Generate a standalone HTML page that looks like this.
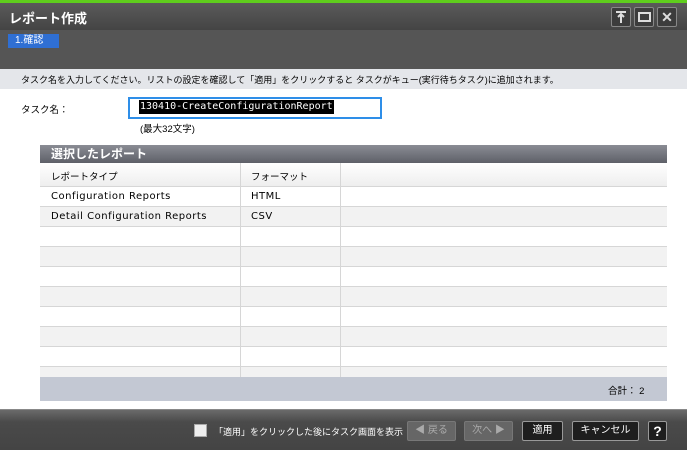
<!DOCTYPE html>
<html><head><meta charset="utf-8"><style>
*{margin:0;padding:0;box-sizing:border-box}
body{width:687px;height:450px;overflow:hidden;background:#fff;font-family:"Liberation Sans","Noto Sans CJK JP",sans-serif;font-size:11px;color:#000;position:relative}
.a{position:absolute;white-space:nowrap}
.wb{position:absolute;top:7px;width:20px;height:20px;border:1px solid #888;border-radius:2px;background:#3c3c3c;color:#ddd;text-align:center;line-height:18px;font-size:14px;font-weight:bold}
.row{position:absolute;left:40px;width:627px;height:20px;border-bottom:1px solid #d6d6d6}
.c{position:absolute;top:0;height:100%;border-right:1px solid #d6d6d6}
.d{position:absolute;top:4px;font-family:'DejaVu Sans',sans-serif;font-size:10px;letter-spacing:0.5px;white-space:nowrap}
.btn{position:absolute;top:421px;height:20px;border:1px solid #999;border-radius:2px;background:#1e1e1e;color:#fff;text-align:center;line-height:18px;font-size:10px}
</style></head><body>
<div class="a" style="left:0;top:0;width:687px;height:3px;background:#5fce1d"></div>
<div class="a" style="left:0;top:3px;width:687px;height:27px;background:linear-gradient(#5a5a5a,#444)"></div>
<div class="a" style="left:9px;top:8px;color:#fff;font-size:13px;font-weight:bold">レポート作成</div>
<div class="wb" style="left:611px">
<svg width="18" height="18" viewBox="0 0 18 18"><path d="M4 4h10M9 6v9M6 9l3-3 3 3" stroke="#ddd" stroke-width="2" fill="none"/></svg></div>
<div class="wb" style="left:634px"><div style="margin:4px auto;width:13px;height:10px;border:2px solid #ddd"></div></div>
<div class="wb" style="left:657px">✕</div>
<div class="a" style="left:0;top:30px;width:687px;height:39px;background:#555"></div>
<div class="a" style="left:8px;top:34px;width:51px;height:14px;background:#2f6fd3;color:#fff;font-size:10px;line-height:14px;padding-left:7px">1.確認</div>
<div class="a" style="left:0;top:69px;width:687px;height:20px;background:#e4e6ea"></div>
<div class="a" style="left:21px;top:73px;font-size:9px">タスク名を入力してください。リストの設定を確認して「適用」をクリックすると タスクがキュー(実行待ちタスク)に追加されます。</div>
<div class="a" style="left:21px;top:102px;font-size:9.5px">タスク名：</div>
<div class="a" style="left:128px;top:97px;width:254px;height:22px;border:2px solid #2e8ee8;background:#fff"></div>
<div class="a" style="left:139px;top:100px;background:#000;color:#fff;font-family:'DejaVu Sans Mono',monospace;font-size:10px;line-height:14px;padding:0 1px">130410-CreateConfigurationReport</div>
<div class="a" style="left:140px;top:121px;font-size:9.5px">(最大32文字)</div>
<div class="a" style="left:40px;top:145px;width:627px;height:18px;background:linear-gradient(#8a8c94,#5e6068);color:#fff;font-weight:bold;font-size:12px;line-height:18px;padding-left:11px">選択したレポート</div>
<div class="row" style="top:163px;height:24px;background:linear-gradient(#fff,#eee)"><div class="c" style="left:0;width:201px"></div><div class="c" style="left:201px;width:100px"></div>
<span class="a" style="left:11px;top:6px;font-size:9.5px">レポートタイプ</span><span class="a" style="left:211px;top:6px;font-size:9.5px">フォーマット</span></div>
<div class="row" style="top:187px;background:#fff"><div class="c" style="left:0;width:201px"></div><div class="c" style="left:201px;width:100px"></div><span class="d" style="left:11px">Configuration Reports</span><span class="d" style="left:211px">HTML</span></div>
<div class="row" style="top:207px;background:#f2f2f2"><div class="c" style="left:0;width:201px"></div><div class="c" style="left:201px;width:100px"></div><span class="d" style="left:11px">Detail Configuration Reports</span><span class="d" style="left:211px">CSV</span></div>
<div class="row" style="top:227px;background:#fff"><div class="c" style="left:0;width:201px"></div><div class="c" style="left:201px;width:100px"></div></div>
<div class="row" style="top:247px;background:#f2f2f2"><div class="c" style="left:0;width:201px"></div><div class="c" style="left:201px;width:100px"></div></div>
<div class="row" style="top:267px;background:#fff"><div class="c" style="left:0;width:201px"></div><div class="c" style="left:201px;width:100px"></div></div>
<div class="row" style="top:287px;background:#f2f2f2"><div class="c" style="left:0;width:201px"></div><div class="c" style="left:201px;width:100px"></div></div>
<div class="row" style="top:307px;background:#fff"><div class="c" style="left:0;width:201px"></div><div class="c" style="left:201px;width:100px"></div></div>
<div class="row" style="top:327px;background:#f2f2f2"><div class="c" style="left:0;width:201px"></div><div class="c" style="left:201px;width:100px"></div></div>
<div class="row" style="top:347px;background:#fff"><div class="c" style="left:0;width:201px"></div><div class="c" style="left:201px;width:100px"></div></div>
<div class="row" style="top:367px;height:10px;background:#f2f2f2;border:none"><div class="c" style="left:0;width:201px"></div><div class="c" style="left:201px;width:100px"></div></div>
<div class="a" style="left:40px;top:377px;width:627px;height:24px;background:#c3c8d3"></div>
<div class="a" style="left:608px;top:383px;font-size:9.5px">合計： 2</div>
<div class="a" style="left:0;top:409px;width:687px;height:41px;background:linear-gradient(#6a6a6a,#4a4a4a 30%,#444);border-top:1px solid #888"></div>
<div class="a" style="left:194px;top:424px;width:13px;height:13px;background:#eee;border:1px solid #aaa"></div>
<div class="a" style="left:214px;top:425px;color:#fff;font-size:9px">「適用」をクリックした後にタスク画面を表示</div>
<div class="btn" style="left:407px;width:49px;background:#666;border-color:#777;color:#aaa">◀ 戻る</div>
<div class="btn" style="left:464px;width:49px;background:#666;border-color:#777;color:#aaa">次へ ▶</div>
<div class="btn" style="left:522px;width:41px">適用</div>
<div class="btn" style="left:572px;width:67px">キャンセル</div>
<div class="btn" style="left:648px;width:19px;font-weight:bold;font-size:14px">?</div>
</body></html>
